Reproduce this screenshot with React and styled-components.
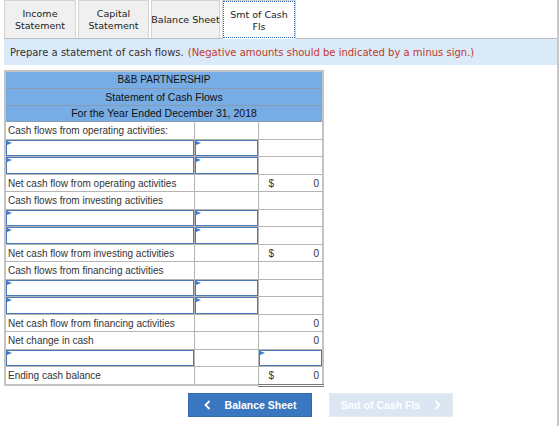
import React from 'react'
import styled, { createGlobalStyle } from 'styled-components'

const GlobalStyle = createGlobalStyle`
  body {
    margin: 0;
    background: #fff;
  }
`

const Page = styled.div`
  width: 553px;
  height: 426px;
  border-right: 2px solid #c8c8c8;
  box-sizing: content-box;
  padding-left: 4px;
`

const TabBar = styled.div`
  display: flex;
  gap: 2px;
  height: 39px;
  border-bottom: 1px solid #bdbdbd;
  box-sizing: border-box;
`

const Tab = styled.div`
  display: flex;
  align-items: center;
  justify-content: center;
  width: ${props => props.width}px;
  padding: 1px 0 0;
  box-sizing: border-box;
  text-align: center;
  font-family: "DejaVu Sans", Verdana, sans-serif;
  font-size: 9.5px;
  line-height: 12px;
  color: #222;
  white-space: ${props => props.nowrap ? 'nowrap' : 'normal'};
  background: ${props => props.active ? '#fff' : '#f0f0f0'};
  border: 1px solid #d4d4d4;
  border-bottom: none;
  outline: ${props => props.active ? '1px dotted #2a62b8' : 'none'};
  outline-offset: -2px;
  margin-bottom: ${props => props.active ? '-1px' : '0'};
`

const Instructions = styled.div`
  height: 26px;
  display: flex;
  align-items: center;
  padding-left: 6px;
  background: #dbeaf8;
  font-family: "DejaVu Sans", Verdana, sans-serif;
  font-size: 10px;
  color: #333;
`

const Red = styled.span`
  color: #c0392b;
  margin-left: 4px;
`

const Sheet = styled.table`
  margin-top: 5px;
  border-collapse: collapse;
  width: 318px;
  table-layout: fixed;
  font-family: "Liberation Sans", Arial, sans-serif;
  font-size: 10px;
  color: #333;
  border: 2px solid #c3c3c3;
`

const HeadCell = styled.td`
  background: #78ace4;
  border: 1px solid #8a9bb0;
  text-align: center;
  height: 15.8px;
  padding: 0;
  color: #111;
  font-size: ${props => props.size || 10.5}px;
`

const Cell = styled.td`
  border: 1px solid #b5b5b5;
  height: 16.5px;
  padding: 0 2px;
  white-space: nowrap;
  overflow: hidden;
  border-bottom: ${props => props.total ? '3px double #777' : '1px solid #b5b5b5'};
`

const Amount = styled.div`
  display: flex;
  justify-content: space-between;
  padding: 0 1px 0 8px;
`

const InputCell = styled.td`
  padding: 0;
  border: 1px solid #b5b5b5;
  height: 16.5px;
  position: relative;
`

const InputBox = styled.div`
  position: absolute;
  inset: 0;
  border: 1.5px solid #4a78b8;
  background: #fff;

  &::before {
    content: '';
    position: absolute;
    left: 0;
    top: 0;
    border-left: 5px solid #3d7ad0;
    border-top: 2px solid transparent;
    border-bottom: 2px solid transparent;
  }
`

const Footer = styled.div`
  display: flex;
  gap: 17px;
  margin-top: 6px;
  padding-left: 184px;
`

const NavButton = styled.div`
  width: 124px;
  height: 24px;
  display: flex;
  align-items: center;
  justify-content: center;
  gap: 14px;
  font-family: "Liberation Sans", Arial, sans-serif;
  font-size: 10.5px;
  font-weight: bold;
  color: #fff;
  background: ${props => props.disabled ? '#dbe6f2' : '#3a77c1'};
  border: 1px solid ${props => props.disabled ? '#e3ebf5' : '#3569ab'};
  box-sizing: border-box;
`

const Chevron = ({ dir }) => (
  <svg width="7" height="10" viewBox="0 0 7 10">
    <path
      d={dir === 'left' ? 'M5.5 1 L1.5 5 L5.5 9' : 'M1.5 1 L5.5 5 L1.5 9'}
      fill="none"
      stroke="#fff"
      strokeWidth="1.8"
    />
  </svg>
)

const InputRow = ({ second = true, third = false }) => (
  <tr>
    <InputCell><InputBox /></InputCell>
    {second ? <InputCell><InputBox /></InputCell> : <Cell />}
    {third ? <InputCell><InputBox /></InputCell> : <Cell />}
  </tr>
)

const LabelRow = ({ label, dollar, value, total }) => (
  <tr>
    <Cell>{label}</Cell>
    <Cell />
    <Cell total={total}>
      {value !== undefined && (
        <Amount>
          <span>{dollar ? '$' : ''}</span>
          <span>{value}</span>
        </Amount>
      )}
    </Cell>
  </tr>
)

export default function App() {
  return (
    <Page>
      <GlobalStyle />
      <TabBar>
        <Tab width={72}>Income Statement</Tab>
        <Tab width={71}>Capital Statement</Tab>
        <Tab width={69} nowrap>Balance Sheet</Tab>
        <Tab width={74} active>Smt of Cash Fls</Tab>
      </TabBar>
      <Instructions>
        Prepare a statement of cash flows.
        <Red>(Negative amounts should be indicated by a minus sign.)</Red>
      </Instructions>
      <Sheet>
        <colgroup>
          <col style={{ width: 189 }} />
          <col style={{ width: 64 }} />
          <col style={{ width: 65 }} />
        </colgroup>
        <tbody>
          <tr><HeadCell colSpan={3} size={10}>B&amp;B PARTNERSHIP</HeadCell></tr>
          <tr><HeadCell colSpan={3}>Statement of Cash Flows</HeadCell></tr>
          <tr><HeadCell colSpan={3}>For the Year Ended December 31, 2018</HeadCell></tr>
          <LabelRow label="Cash flows from operating activities:" />
          <InputRow />
          <InputRow />
          <LabelRow label="Net cash flow from operating activities" dollar value="0" />
          <LabelRow label="Cash flows from investing activities" />
          <InputRow />
          <InputRow />
          <LabelRow label="Net cash flow from investing activities" dollar value="0" />
          <LabelRow label="Cash flows from financing activities" />
          <InputRow />
          <InputRow />
          <LabelRow label="Net cash flow from financing activities" value="0" />
          <LabelRow label="Net change in cash" value="0" />
          <InputRow second={false} third />
          <LabelRow label="Ending cash balance" dollar value="0" total />
        </tbody>
      </Sheet>
      <Footer>
        <NavButton><Chevron dir="left" />Balance Sheet</NavButton>
        <NavButton disabled>Smt of Cash Fls<Chevron dir="right" /></NavButton>
      </Footer>
    </Page>
  )
}
